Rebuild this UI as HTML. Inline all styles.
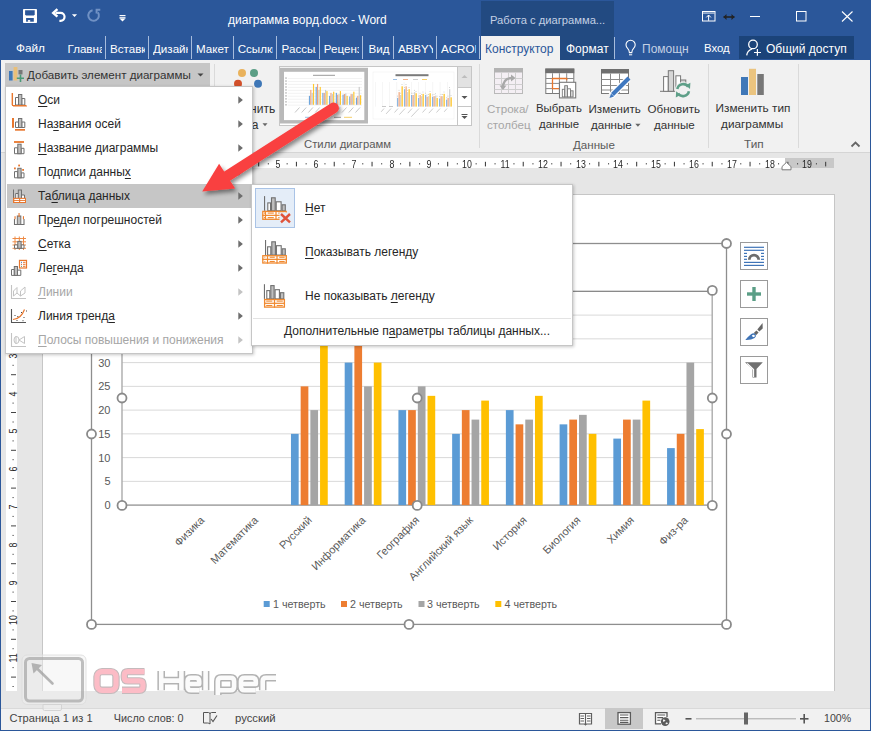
<!DOCTYPE html>
<html><head><meta charset="utf-8">
<style>
*{margin:0;padding:0;box-sizing:border-box}
html,body{width:871px;height:731px;overflow:hidden;background:#e6e6e6;font-family:"Liberation Sans",sans-serif;}
.a{position:absolute}
.t{position:absolute;white-space:nowrap;line-height:1}
#title{left:0;top:0;width:871px;height:60px;background:#2b579a}
#ribbon{left:1px;top:60px;width:869px;height:93px;background:#f1f1f1;border-bottom:1px solid #d5d5d5}
#docbg{left:1px;top:153px;width:869px;height:555px;background:#e6e6e6}
#page{left:42px;top:194px;width:793px;height:497px;background:#fff;border:1px solid #c6c6c6;border-bottom:none}
#status{left:0;top:708px;width:871px;height:23px;background:#f1f1f1;border-top:1px solid #d9d9d9}
#lborder{left:0;top:0;width:1px;height:731px;background:#2b579a}
#rborder{left:870px;top:0;width:1px;height:731px;background:#2b579a}
#bborder{left:0;top:730px;width:871px;height:1px;background:#2b579a}
.wt{color:#fff;font-size:12px}
u{text-decoration:underline;text-underline-offset:2px;text-decoration-thickness:1px;text-decoration-skip-ink:none}
</style></head><body>
<div class="a" id="title"></div>
<div class="a" id="ribbon"></div>
<div class="a" id="docbg"></div>
<div class="a" id="page"></div>
<!-- RULERS -->
<svg class="a" style="left:0;top:153px" width="871" height="540">
<rect x="42" y="5" width="47" height="10" fill="#c8c8c8"/>
<rect x="89" y="5" width="696" height="10" fill="#fff"/>
<rect x="785" y="5" width="49" height="10" fill="#c8c8c8"/>
<rect x="59.9" y="10.2" width="1.1" height="1.2" fill="#444"/>
<rect x="69.1" y="8.8" width="1.1" height="4.6" fill="#444"/>
<rect x="78.7" y="10.2" width="1.1" height="1.2" fill="#444"/>
<rect x="97.6" y="10.2" width="1.1" height="1.2" fill="#444"/>
<rect x="106.9" y="8.8" width="1.1" height="4.6" fill="#444"/>
<rect x="116.5" y="10.2" width="1.1" height="1.2" fill="#444"/>
<rect x="135.4" y="10.2" width="1.1" height="1.2" fill="#444"/>
<rect x="144.7" y="8.8" width="1.1" height="4.6" fill="#444"/>
<rect x="154.3" y="10.2" width="1.1" height="1.2" fill="#444"/>
<rect x="173.2" y="10.2" width="1.1" height="1.2" fill="#444"/>
<rect x="182.5" y="8.8" width="1.1" height="4.6" fill="#444"/>
<rect x="192.1" y="10.2" width="1.1" height="1.2" fill="#444"/>
<rect x="211.0" y="10.2" width="1.1" height="1.2" fill="#444"/>
<rect x="220.3" y="8.8" width="1.1" height="4.6" fill="#444"/>
<rect x="229.9" y="10.2" width="1.1" height="1.2" fill="#444"/>
<rect x="248.8" y="10.2" width="1.1" height="1.2" fill="#444"/>
<rect x="258.1" y="8.8" width="1.1" height="4.6" fill="#444"/>
<rect x="267.8" y="10.2" width="1.1" height="1.2" fill="#444"/>
<rect x="286.6" y="10.2" width="1.1" height="1.2" fill="#444"/>
<rect x="295.9" y="8.8" width="1.1" height="4.6" fill="#444"/>
<rect x="305.6" y="10.2" width="1.1" height="1.2" fill="#444"/>
<rect x="324.4" y="10.2" width="1.1" height="1.2" fill="#444"/>
<rect x="333.7" y="8.8" width="1.1" height="4.6" fill="#444"/>
<rect x="343.4" y="10.2" width="1.1" height="1.2" fill="#444"/>
<rect x="362.2" y="10.2" width="1.1" height="1.2" fill="#444"/>
<rect x="371.5" y="8.8" width="1.1" height="4.6" fill="#444"/>
<rect x="381.1" y="10.2" width="1.1" height="1.2" fill="#444"/>
<rect x="400.0" y="10.2" width="1.1" height="1.2" fill="#444"/>
<rect x="409.3" y="8.8" width="1.1" height="4.6" fill="#444"/>
<rect x="419.0" y="10.2" width="1.1" height="1.2" fill="#444"/>
<rect x="437.9" y="10.2" width="1.1" height="1.2" fill="#444"/>
<rect x="447.1" y="8.8" width="1.1" height="4.6" fill="#444"/>
<rect x="456.8" y="10.2" width="1.1" height="1.2" fill="#444"/>
<rect x="475.6" y="10.2" width="1.1" height="1.2" fill="#444"/>
<rect x="484.9" y="8.8" width="1.1" height="4.6" fill="#444"/>
<rect x="494.5" y="10.2" width="1.1" height="1.2" fill="#444"/>
<rect x="513.4" y="10.2" width="1.1" height="1.2" fill="#444"/>
<rect x="522.7" y="8.8" width="1.1" height="4.6" fill="#444"/>
<rect x="532.4" y="10.2" width="1.1" height="1.2" fill="#444"/>
<rect x="551.2" y="10.2" width="1.1" height="1.2" fill="#444"/>
<rect x="560.5" y="8.8" width="1.1" height="4.6" fill="#444"/>
<rect x="570.1" y="10.2" width="1.1" height="1.2" fill="#444"/>
<rect x="589.0" y="10.2" width="1.1" height="1.2" fill="#444"/>
<rect x="598.3" y="8.8" width="1.1" height="4.6" fill="#444"/>
<rect x="608.0" y="10.2" width="1.1" height="1.2" fill="#444"/>
<rect x="626.9" y="10.2" width="1.1" height="1.2" fill="#444"/>
<rect x="636.1" y="8.8" width="1.1" height="4.6" fill="#444"/>
<rect x="645.8" y="10.2" width="1.1" height="1.2" fill="#444"/>
<rect x="664.6" y="10.2" width="1.1" height="1.2" fill="#444"/>
<rect x="673.9" y="8.8" width="1.1" height="4.6" fill="#444"/>
<rect x="683.5" y="10.2" width="1.1" height="1.2" fill="#444"/>
<rect x="702.5" y="10.2" width="1.1" height="1.2" fill="#444"/>
<rect x="711.7" y="8.8" width="1.1" height="4.6" fill="#444"/>
<rect x="721.4" y="10.2" width="1.1" height="1.2" fill="#444"/>
<rect x="740.2" y="10.2" width="1.1" height="1.2" fill="#444"/>
<rect x="749.5" y="8.8" width="1.1" height="4.6" fill="#444"/>
<rect x="759.1" y="10.2" width="1.1" height="1.2" fill="#444"/>
<rect x="778.0" y="10.2" width="1.1" height="1.2" fill="#444"/>
<rect x="787.3" y="8.8" width="1.1" height="4.6" fill="#444"/>
<rect x="797.0" y="10.2" width="1.1" height="1.2" fill="#444"/>
<rect x="815.9" y="10.2" width="1.1" height="1.2" fill="#444"/>
<rect x="825.1" y="8.8" width="1.1" height="4.6" fill="#444"/>
<rect x="6" y="0" width="11" height="538" fill="#fff"/>
<rect x="12.5" y="3.9" width="1.2" height="1" fill="#444"/>
<rect x="12.5" y="22.8" width="1.2" height="1" fill="#444"/>
<rect x="11" y="32.2" width="5" height="1" fill="#444"/>
<rect x="12.5" y="41.7" width="1.2" height="1" fill="#444"/>
<rect x="12.5" y="60.6" width="1.2" height="1" fill="#444"/>
<rect x="11" y="70.0" width="5" height="1" fill="#444"/>
<rect x="12.5" y="79.5" width="1.2" height="1" fill="#444"/>
<rect x="12.5" y="98.4" width="1.2" height="1" fill="#444"/>
<rect x="11" y="107.8" width="5" height="1" fill="#444"/>
<rect x="12.5" y="117.3" width="1.2" height="1" fill="#444"/>
<rect x="12.5" y="136.2" width="1.2" height="1" fill="#444"/>
<rect x="11" y="145.6" width="5" height="1" fill="#444"/>
<rect x="12.5" y="155.1" width="1.2" height="1" fill="#444"/>
<rect x="12.5" y="174.0" width="1.2" height="1" fill="#444"/>
<rect x="11" y="183.4" width="5" height="1" fill="#444"/>
<rect x="12.5" y="192.9" width="1.2" height="1" fill="#444"/>
<rect x="12.5" y="211.8" width="1.2" height="1" fill="#444"/>
<rect x="11" y="221.2" width="5" height="1" fill="#444"/>
<rect x="12.5" y="230.7" width="1.2" height="1" fill="#444"/>
<rect x="12.5" y="249.6" width="1.2" height="1" fill="#444"/>
<rect x="11" y="259.0" width="5" height="1" fill="#444"/>
<rect x="12.5" y="268.5" width="1.2" height="1" fill="#444"/>
<rect x="12.5" y="287.4" width="1.2" height="1" fill="#444"/>
<rect x="11" y="296.8" width="5" height="1" fill="#444"/>
<rect x="12.5" y="306.2" width="1.2" height="1" fill="#444"/>
<rect x="12.5" y="325.1" width="1.2" height="1" fill="#444"/>
<rect x="11" y="334.6" width="5" height="1" fill="#444"/>
<rect x="12.5" y="344.1" width="1.2" height="1" fill="#444"/>
<rect x="12.5" y="362.9" width="1.2" height="1" fill="#444"/>
<rect x="11" y="372.4" width="5" height="1" fill="#444"/>
<rect x="12.5" y="381.9" width="1.2" height="1" fill="#444"/>
<rect x="12.5" y="400.8" width="1.2" height="1" fill="#444"/>
<rect x="11" y="410.2" width="5" height="1" fill="#444"/>
<rect x="12.5" y="419.7" width="1.2" height="1" fill="#444"/>
<rect x="12.5" y="438.6" width="1.2" height="1" fill="#444"/>
<rect x="11" y="448.0" width="5" height="1" fill="#444"/>
<rect x="12.5" y="457.4" width="1.2" height="1" fill="#444"/>
<rect x="12.5" y="476.4" width="1.2" height="1" fill="#444"/>
<rect x="11" y="485.8" width="5" height="1" fill="#444"/>
<rect x="12.5" y="495.2" width="1.2" height="1" fill="#444"/>
<rect x="12.5" y="514.1" width="1.2" height="1" fill="#444"/>
<rect x="11" y="523.6" width="5" height="1" fill="#444"/>
<rect x="12.5" y="533.0" width="1.2" height="1" fill="#444"/>
<path d="M782 16.8 V13.6 L786.5 9.3 L791 13.6 V16.8 Z" fill="#fff" stroke="#7a7a7a" stroke-width="1"/>
</svg>
<div class="t" style="left:116.9px;top:158.5px;width:20px;text-align:center;font-size:10.5px;color:#262626;transform:scaleX(0.84)">1</div>
<div class="t" style="left:154.7px;top:158.5px;width:20px;text-align:center;font-size:10.5px;color:#262626;transform:scaleX(0.84)">2</div>
<div class="t" style="left:192.5px;top:158.5px;width:20px;text-align:center;font-size:10.5px;color:#262626;transform:scaleX(0.84)">3</div>
<div class="t" style="left:230.3px;top:158.5px;width:20px;text-align:center;font-size:10.5px;color:#262626;transform:scaleX(0.84)">4</div>
<div class="t" style="left:268.1px;top:158.5px;width:20px;text-align:center;font-size:10.5px;color:#262626;transform:scaleX(0.84)">5</div>
<div class="t" style="left:305.9px;top:158.5px;width:20px;text-align:center;font-size:10.5px;color:#262626;transform:scaleX(0.84)">6</div>
<div class="t" style="left:343.7px;top:158.5px;width:20px;text-align:center;font-size:10.5px;color:#262626;transform:scaleX(0.84)">7</div>
<div class="t" style="left:381.5px;top:158.5px;width:20px;text-align:center;font-size:10.5px;color:#262626;transform:scaleX(0.84)">8</div>
<div class="t" style="left:419.3px;top:158.5px;width:20px;text-align:center;font-size:10.5px;color:#262626;transform:scaleX(0.84)">9</div>
<div class="t" style="left:457.1px;top:158.5px;width:20px;text-align:center;font-size:10.5px;color:#262626;transform:scaleX(0.84)">10</div>
<div class="t" style="left:494.9px;top:158.5px;width:20px;text-align:center;font-size:10.5px;color:#262626;transform:scaleX(0.84)">11</div>
<div class="t" style="left:532.7px;top:158.5px;width:20px;text-align:center;font-size:10.5px;color:#262626;transform:scaleX(0.84)">12</div>
<div class="t" style="left:570.5px;top:158.5px;width:20px;text-align:center;font-size:10.5px;color:#262626;transform:scaleX(0.84)">13</div>
<div class="t" style="left:608.3px;top:158.5px;width:20px;text-align:center;font-size:10.5px;color:#262626;transform:scaleX(0.84)">14</div>
<div class="t" style="left:646.1px;top:158.5px;width:20px;text-align:center;font-size:10.5px;color:#262626;transform:scaleX(0.84)">15</div>
<div class="t" style="left:683.9px;top:158.5px;width:20px;text-align:center;font-size:10.5px;color:#262626;transform:scaleX(0.84)">16</div>
<div class="t" style="left:721.7px;top:158.5px;width:20px;text-align:center;font-size:10.5px;color:#262626;transform:scaleX(0.84)">17</div>
<div class="t" style="left:759.5px;top:158.5px;width:20px;text-align:center;font-size:10.5px;color:#262626;transform:scaleX(0.84)">18</div>
<div class="t" style="left:797.3px;top:158.5px;width:20px;text-align:center;font-size:10.5px;color:#262626;transform:scaleX(0.84)">19</div>
<div class="t" style="left:3px;top:275.2px;width:20px;height:10px;text-align:center;font-size:10.5px;color:#262626;transform:rotate(-90deg) scaleX(0.84)">1</div>
<div class="t" style="left:3px;top:313.0px;width:20px;height:10px;text-align:center;font-size:10.5px;color:#262626;transform:rotate(-90deg) scaleX(0.84)">2</div>
<div class="t" style="left:3px;top:350.8px;width:20px;height:10px;text-align:center;font-size:10.5px;color:#262626;transform:rotate(-90deg) scaleX(0.84)">3</div>
<div class="t" style="left:3px;top:388.6px;width:20px;height:10px;text-align:center;font-size:10.5px;color:#262626;transform:rotate(-90deg) scaleX(0.84)">4</div>
<div class="t" style="left:3px;top:426.4px;width:20px;height:10px;text-align:center;font-size:10.5px;color:#262626;transform:rotate(-90deg) scaleX(0.84)">5</div>
<div class="t" style="left:3px;top:464.2px;width:20px;height:10px;text-align:center;font-size:10.5px;color:#262626;transform:rotate(-90deg) scaleX(0.84)">6</div>
<div class="t" style="left:3px;top:502.0px;width:20px;height:10px;text-align:center;font-size:10.5px;color:#262626;transform:rotate(-90deg) scaleX(0.84)">7</div>
<div class="t" style="left:3px;top:539.8px;width:20px;height:10px;text-align:center;font-size:10.5px;color:#262626;transform:rotate(-90deg) scaleX(0.84)">8</div>
<div class="t" style="left:3px;top:577.6px;width:20px;height:10px;text-align:center;font-size:10.5px;color:#262626;transform:rotate(-90deg) scaleX(0.84)">9</div>
<div class="t" style="left:3px;top:615.4px;width:20px;height:10px;text-align:center;font-size:10.5px;color:#262626;transform:rotate(-90deg) scaleX(0.84)">10</div>
<div class="t" style="left:3px;top:653.2px;width:20px;height:10px;text-align:center;font-size:10.5px;color:#262626;transform:rotate(-90deg) scaleX(0.84)">11</div>
<!-- CHART -->
<svg class="a" style="left:0;top:0" width="871" height="731" font-family="Liberation Sans, sans-serif">
<rect x="122" y="480.85" width="590" height="1" fill="#d9d9d9"/>
<rect x="122" y="457.10" width="590" height="1" fill="#d9d9d9"/>
<rect x="122" y="433.35" width="590" height="1" fill="#d9d9d9"/>
<rect x="122" y="409.60" width="590" height="1" fill="#d9d9d9"/>
<rect x="122" y="385.85" width="590" height="1" fill="#d9d9d9"/>
<rect x="122" y="362.10" width="590" height="1" fill="#d9d9d9"/>
<rect x="122" y="338.35" width="590" height="1" fill="#d9d9d9"/>
<rect x="122" y="314.60" width="590" height="1" fill="#d9d9d9"/>
<rect x="122" y="290.85" width="590" height="1" fill="#d9d9d9"/>
<rect x="122" y="504.45" width="590" height="1.3" fill="#929292"/>
<text x="110.5" y="509.1" font-size="11" fill="#595959" text-anchor="end">0</text>
<text x="110.5" y="485.4" font-size="11" fill="#595959" text-anchor="end">5</text>
<text x="110.5" y="461.6" font-size="11" fill="#595959" text-anchor="end">10</text>
<text x="110.5" y="437.9" font-size="11" fill="#595959" text-anchor="end">15</text>
<text x="110.5" y="414.1" font-size="11" fill="#595959" text-anchor="end">20</text>
<text x="110.5" y="390.4" font-size="11" fill="#595959" text-anchor="end">25</text>
<text x="110.5" y="366.6" font-size="11" fill="#595959" text-anchor="end">30</text>
<text x="110.5" y="342.9" font-size="11" fill="#595959" text-anchor="end">35</text>
<text x="110.5" y="319.1" font-size="11" fill="#595959" text-anchor="end">40</text>
<text x="110.5" y="295.4" font-size="11" fill="#595959" text-anchor="end">45</text>
<text x="202.2" y="518" font-size="11" fill="#595959" text-anchor="end" dominant-baseline="central" transform="rotate(-45 202.2 518)">Физика</text>
<text x="255.9" y="518" font-size="11" fill="#595959" text-anchor="end" dominant-baseline="central" transform="rotate(-45 255.9 518)">Математика</text>
<rect x="290.96" y="433.85" width="7.7" height="71.25" fill="#5b9bd5"/>
<rect x="300.66" y="386.35" width="7.7" height="118.75" fill="#ed7d31"/>
<rect x="310.36" y="410.10" width="7.7" height="95.00" fill="#a5a5a5"/>
<rect x="320.06" y="338.85" width="7.7" height="166.25" fill="#ffc000"/>
<text x="309.7" y="518" font-size="11" fill="#595959" text-anchor="end" dominant-baseline="central" transform="rotate(-45 309.7 518)">Русский</text>
<rect x="344.69" y="362.60" width="7.7" height="142.50" fill="#5b9bd5"/>
<rect x="354.39" y="338.85" width="7.7" height="166.25" fill="#ed7d31"/>
<rect x="364.09" y="386.35" width="7.7" height="118.75" fill="#a5a5a5"/>
<rect x="373.79" y="362.60" width="7.7" height="142.50" fill="#ffc000"/>
<text x="363.4" y="518" font-size="11" fill="#595959" text-anchor="end" dominant-baseline="central" transform="rotate(-45 363.4 518)">Информатика</text>
<rect x="398.42" y="410.10" width="7.7" height="95.00" fill="#5b9bd5"/>
<rect x="408.12" y="410.10" width="7.7" height="95.00" fill="#ed7d31"/>
<rect x="417.82" y="386.35" width="7.7" height="118.75" fill="#a5a5a5"/>
<rect x="427.52" y="395.85" width="7.7" height="109.25" fill="#ffc000"/>
<text x="417.1" y="518" font-size="11" fill="#595959" text-anchor="end" dominant-baseline="central" transform="rotate(-45 417.1 518)">География</text>
<rect x="452.15" y="433.85" width="7.7" height="71.25" fill="#5b9bd5"/>
<rect x="461.85" y="410.10" width="7.7" height="95.00" fill="#ed7d31"/>
<rect x="471.55" y="419.60" width="7.7" height="85.50" fill="#a5a5a5"/>
<rect x="481.25" y="400.60" width="7.7" height="104.50" fill="#ffc000"/>
<text x="470.8" y="518" font-size="11" fill="#595959" text-anchor="end" dominant-baseline="central" transform="rotate(-45 470.8 518)">Английский язык</text>
<rect x="505.88" y="410.10" width="7.7" height="95.00" fill="#5b9bd5"/>
<rect x="515.58" y="424.35" width="7.7" height="80.75" fill="#ed7d31"/>
<rect x="525.28" y="419.60" width="7.7" height="85.50" fill="#a5a5a5"/>
<rect x="534.98" y="395.85" width="7.7" height="109.25" fill="#ffc000"/>
<text x="524.6" y="518" font-size="11" fill="#595959" text-anchor="end" dominant-baseline="central" transform="rotate(-45 524.6 518)">История</text>
<rect x="559.61" y="424.35" width="7.7" height="80.75" fill="#5b9bd5"/>
<rect x="569.31" y="419.60" width="7.7" height="85.50" fill="#ed7d31"/>
<rect x="579.01" y="414.85" width="7.7" height="90.25" fill="#a5a5a5"/>
<rect x="588.71" y="433.85" width="7.7" height="71.25" fill="#ffc000"/>
<text x="578.3" y="518" font-size="11" fill="#595959" text-anchor="end" dominant-baseline="central" transform="rotate(-45 578.3 518)">Биология</text>
<rect x="613.34" y="438.60" width="7.7" height="66.50" fill="#5b9bd5"/>
<rect x="623.04" y="419.60" width="7.7" height="85.50" fill="#ed7d31"/>
<rect x="632.74" y="419.60" width="7.7" height="85.50" fill="#a5a5a5"/>
<rect x="642.44" y="400.60" width="7.7" height="104.50" fill="#ffc000"/>
<text x="632.0" y="518" font-size="11" fill="#595959" text-anchor="end" dominant-baseline="central" transform="rotate(-45 632.0 518)">Химия</text>
<rect x="667.07" y="448.10" width="7.7" height="57.00" fill="#5b9bd5"/>
<rect x="676.77" y="433.85" width="7.7" height="71.25" fill="#ed7d31"/>
<rect x="686.47" y="362.60" width="7.7" height="142.50" fill="#a5a5a5"/>
<rect x="696.17" y="429.10" width="7.7" height="76.00" fill="#ffc000"/>
<text x="685.8" y="518" font-size="11" fill="#595959" text-anchor="end" dominant-baseline="central" transform="rotate(-45 685.8 518)">Физ-ра</text>
<rect x="263.7" y="601" width="6" height="6" fill="#5b9bd5"/>
<text x="273" y="608" font-size="10.7" fill="#595959">1 четверть</text>
<rect x="341" y="601" width="6" height="6" fill="#ed7d31"/>
<text x="350" y="608" font-size="10.7" fill="#595959">2 четверть</text>
<rect x="418.5" y="601" width="6" height="6" fill="#a5a5a5"/>
<text x="427" y="608" font-size="10.7" fill="#595959">3 четверть</text>
<rect x="495.3" y="601" width="6" height="6" fill="#ffc000"/>
<text x="504.5" y="608" font-size="10.7" fill="#595959">4 четверть</text>
<rect x="91.5" y="243.5" width="635" height="380.9" fill="none" stroke="#8e8e8e" stroke-width="1.3"/>
<path d="M122 291 V505 M712.2 291 V505" fill="none" stroke="#ababab" stroke-width="1.4"/>
<rect x="122" y="290.7" width="590" height="1.3" fill="#8a8a8a"/>
<circle cx="91.5" cy="243.5" r="4.5" fill="#fff" stroke="#8a8a8a" stroke-width="1.8"/>
<circle cx="91.5" cy="434" r="4.5" fill="#fff" stroke="#8a8a8a" stroke-width="1.8"/>
<circle cx="91.5" cy="624.4" r="4.5" fill="#fff" stroke="#8a8a8a" stroke-width="1.8"/>
<circle cx="409" cy="243.5" r="4.5" fill="#fff" stroke="#8a8a8a" stroke-width="1.8"/>
<circle cx="409" cy="624.4" r="4.5" fill="#fff" stroke="#8a8a8a" stroke-width="1.8"/>
<circle cx="726.5" cy="243.5" r="4.5" fill="#fff" stroke="#8a8a8a" stroke-width="1.8"/>
<circle cx="726.5" cy="434" r="4.5" fill="#fff" stroke="#8a8a8a" stroke-width="1.8"/>
<circle cx="726.5" cy="624.4" r="4.5" fill="#fff" stroke="#8a8a8a" stroke-width="1.8"/>
<circle cx="122" cy="290.4" r="4.5" fill="#fff" stroke="#8a8a8a" stroke-width="1.8"/>
<circle cx="122" cy="398" r="4.5" fill="#fff" stroke="#8a8a8a" stroke-width="1.8"/>
<circle cx="122" cy="505.4" r="4.5" fill="#fff" stroke="#8a8a8a" stroke-width="1.8"/>
<circle cx="417.2" cy="290.4" r="4.5" fill="#fff" stroke="#8a8a8a" stroke-width="1.8"/>
<circle cx="417.2" cy="398" r="4.5" fill="#fff" stroke="#8a8a8a" stroke-width="1.8"/>
<circle cx="417.2" cy="505.4" r="4.5" fill="#fff" stroke="#8a8a8a" stroke-width="1.8"/>
<circle cx="712.3" cy="290.4" r="4.5" fill="#fff" stroke="#8a8a8a" stroke-width="1.8"/>
<circle cx="712.3" cy="398" r="4.5" fill="#fff" stroke="#8a8a8a" stroke-width="1.8"/>
<circle cx="712.3" cy="505.4" r="4.5" fill="#fff" stroke="#8a8a8a" stroke-width="1.8"/>
<rect x="740.5" y="242.5" width="27" height="27" fill="#fff" stroke="#9a9a9a" stroke-width="1"/>
<rect x="740.5" y="280.5" width="27" height="27" fill="#fff" stroke="#9a9a9a" stroke-width="1"/>
<rect x="740.5" y="318.5" width="27" height="27" fill="#fff" stroke="#9a9a9a" stroke-width="1"/>
<rect x="740.5" y="356.5" width="27" height="27" fill="#fff" stroke="#9a9a9a" stroke-width="1"/>
<rect x="744" y="246.7" width="20" height="1.2" fill="#3f74b7"/>
<rect x="744" y="249.7" width="20" height="1.2" fill="#3f74b7"/>
<rect x="744" y="261.8" width="20" height="1.2" fill="#3f74b7"/>
<rect x="744" y="264.8" width="20" height="1.2" fill="#3f74b7"/>
<rect x="744" y="252.8" width="3" height="1.2" fill="#3f74b7"/>
<rect x="761" y="252.8" width="3" height="1.2" fill="#3f74b7"/>
<rect x="744" y="255.8" width="3" height="1.2" fill="#3f74b7"/>
<rect x="761" y="255.8" width="3" height="1.2" fill="#3f74b7"/>
<rect x="744" y="258.7" width="3" height="1.2" fill="#3f74b7"/>
<rect x="761" y="258.7" width="3" height="1.2" fill="#3f74b7"/>
<path d="M749.3 259.8 A4.7 4.7 0 0 1 758.7 259.8" fill="none" stroke="#6d6d6d" stroke-width="2.8"/>
<rect x="747" y="292.3" width="14" height="3.4" fill="#5a9e86"/><rect x="752.3" y="287" width="3.4" height="14" fill="#5a9e86"/>
<path d="M762.6 323 L762.7 328.4 L759.3 331.6 L757.3 329.6 Z" fill="#666"/>
<path d="M756.4 330.4 L758.6 332.6 L756 335.2 L753.8 333 Z" fill="#666"/>
<path d="M745.3 339.9 Q748.5 336 751.3 333.9 Q753.8 332.5 755.5 334.3 Q756.8 336.3 754.6 338.1 Q751 340.2 745.3 339.9 Z" fill="#3f74b7"/>
<path d="M751.8 335.6 Q753.3 334.2 754.5 335 Q755.3 336.2 754.1 337.3 L752.6 336.7 Z" fill="#fff"/>
<path d="M745 362.3 H762.8 L756.5 369 V377.6 H752.5 V369 Z" fill="#707070"/>
<path d="M747.2 363.3 L753.6 369.6 V377" fill="none" stroke="#fff" stroke-width="1.1"/>
</svg>
<div class="a" id="status"></div>
<!-- STATUS -->
<div class="a" style="left:605px;top:708px;width:38px;height:21px;background:#c8c8c8"></div>
<svg class="a" style="left:0;top:700px" width="871" height="31">
 <!-- proofing -->
 <path d="M203.5 12.5 H208.5 Q210 12.5 210 14 V24 Q209 23 207.5 23 H203.5 Z M210 14 Q210 12.5 211.5 12.5 H216" fill="none" stroke="#555" stroke-width="1"/>
 <path d="M211 19 L213 21.5 L217 15.5" fill="none" stroke="#555" stroke-width="1.1"/>
 <!-- read mode -->
 <path d="M579.5 13.5 H585.5 V24 H579.5 Z M585.5 13.5 H591.5 V24 H585.5" fill="#fff" stroke="#606060" stroke-width="1.2"/>
 <path d="M580.5 16 H584 M580.5 18.5 H584 M580.5 21 H584 M587 16 H590.5 M587 18.5 H590.5 M587 21 H590.5" stroke="#606060" stroke-width="1"/>
 <path d="M584 24 L585.5 25.8 L587 24" fill="#606060"/>
 <!-- print layout -->
 <rect x="618" y="12.6" width="12.4" height="11.6" fill="#fff" stroke="#5a5a5a" stroke-width="1.3"/>
 <path d="M620 15 H628.4 M620 17.6 H628.4 M620 20.2 H628.4 M620 22.4 H628.4" stroke="#5a5a5a" stroke-width="1.1"/>
 <!-- web layout -->
 <path d="M661 23.8 H655.5 V12.6 H667 V17" fill="#fff" stroke="#5a5a5a" stroke-width="1.3"/>
 <path d="M657.3 15 H665.2 M657.3 17.6 H663 M657.3 20.2 H660.5" stroke="#5a5a5a" stroke-width="1.1"/>
 <circle cx="665.2" cy="21.6" r="4.3" fill="#5a5a5a"/>
 <path d="M663 19.5 Q664.5 19 665.5 20.5 Q664.5 22 663 21.5 Z M666 22.5 Q667.5 22 668 23.5 Q666.5 24.8 665.5 24 Z" fill="#f1f1f1"/>
 <!-- zoom -->
 <rect x="685.5" y="18" width="6" height="1.6" fill="#555"/>
 <rect x="696" y="18.3" width="100" height="1" fill="#a6a6a6"/>
 <rect x="744" y="12.5" width="4" height="12" fill="#666"/>
 <rect x="800" y="18" width="8.5" height="1.6" fill="#555"/>
 <rect x="803.4" y="14" width="1.6" height="9.5" fill="#555"/>
</svg>
<div class="t" style="left:9.5px;top:712.6px;font-size:11.1px;color:#444">Страница 1 из 1</div>
<div class="t" style="left:113.7px;top:712.6px;font-size:10.85px;color:#444">Число слов: 0</div>
<div class="t" style="left:235px;top:712.6px;font-size:11.3px;color:#444">русский</div>
<div class="t" style="left:824px;top:712.6px;font-size:10.6px;color:#444">100%</div>
<!-- TITLE BAR -->
<svg class="a" style="left:0;top:0" width="871" height="60">
 <!-- save -->
 <rect x="23" y="9" width="14" height="14.1" rx="0.8" fill="#fff"/>
 <path d="M25.1 10.3 H34.7 V14.4 L33.8 15.4 H26 L25.1 14.4 Z" fill="#2b579a"/>
 <rect x="26.1" y="18" width="7.7" height="3.7" fill="#2b579a"/>
 <rect x="27.9" y="20.1" width="2.3" height="1.7" fill="#fff"/>
 <!-- undo -->
 <path d="M55.5 12.9 H60.6 A3.95 3.95 0 0 1 60.6 20.8 H59.4" fill="none" stroke="#fff" stroke-width="2.2"/>
 <path d="M57.4 9.1 L53.2 12.9 L57.4 16.7" fill="none" stroke="#fff" stroke-width="2.4"/>
 <path d="M71.9 14.2 H77.1 L74.5 17.1 Z" fill="#fff"/>
 <!-- redo disabled -->
 <path d="M92.6 10.3 A5.3 5.3 0 1 0 97.9 12.4" fill="none" stroke="#7091c4" stroke-width="2"/>
 <path d="M100.3 9.8 H96.6 V13.6" fill="none" stroke="#7091c4" stroke-width="2"/>
 <!-- customize qat -->
 <rect x="119.5" y="15" width="6" height="1.2" fill="#fff"/>
 <rect x="119.5" y="17.2" width="6" height="1.2" fill="#fff"/>
 <path d="M119.5 18.5 H125.5 L122.5 21.5 Z" fill="#fff"/>
 <!-- contextual header -->
 <rect x="481" y="1" width="133" height="59" fill="#224a81"/>
 <!-- window controls -->
 <rect x="702.5" y="11.5" width="12.5" height="9.5" fill="none" stroke="#fff" stroke-width="1"/>
 <rect x="703" y="12.6" width="11.5" height="0.9" fill="#fff"/>
 <path d="M708.6 15 V20.8 M706.3 17.4 L708.6 15 L710.9 17.4" fill="none" stroke="#fff" stroke-width="1"/>
 <path d="M723.5 17 H734.5" stroke="#222" stroke-width="1.6"/>
 <path d="M723.5 17 L726.5 14 V20 Z M734.5 17 L731.5 14 V20 Z" fill="#222"/>
 <line x1="750" y1="16.5" x2="760" y2="16.5" stroke="#fff" stroke-width="1"/>
 <rect x="796.5" y="11.5" width="9.5" height="9.5" fill="none" stroke="#fff" stroke-width="1"/>
 <path d="M842 11.5 L852.5 21.5 M852.5 11.5 L842 21.5" stroke="#fff" stroke-width="1.1"/>
 <!-- tab separators -->
 <g fill="#a7bcdc">
  <rect x="105" y="36" width="1" height="23"/><rect x="148" y="36" width="1" height="23"/>
  <rect x="191" y="36" width="1" height="23"/><rect x="233" y="36" width="1" height="23"/>
  <rect x="276" y="36" width="1" height="23"/><rect x="319" y="36" width="1" height="23"/>
  <rect x="362" y="36" width="1" height="23"/><rect x="393" y="36" width="1" height="23"/>
  <rect x="436" y="36" width="1" height="23"/><rect x="479" y="36" width="1" height="23"/>
  <rect x="614" y="37" width="1" height="22"/>
 </g>
 <!-- active tab -->
 <rect x="481" y="36" width="79" height="24" fill="#f1f1f1"/>
 <!-- share button -->
 <rect x="739" y="36" width="115" height="23" fill="#1b4379"/>
 <!-- lightbulb -->
 <path d="M627.6 48.3 A4.6 4.6 0 1 1 633.6 48.3 Q631.8 50.2 631.8 52.6 H629.4 Q629.4 50.2 627.6 48.3 Z" fill="none" stroke="#fff" stroke-width="1.1"/>
 <line x1="629" y1="54.8" x2="632.2" y2="54.8" stroke="#fff" stroke-width="1"/>
 <!-- person icon -->
 <circle cx="753" cy="44.4" r="4.3" fill="none" stroke="#fff" stroke-width="1.3"/>
 <path d="M746.7 55.4 Q747.3 50.6 752 49" fill="none" stroke="#fff" stroke-width="1.3"/>
 <path d="M754 52.5 H761 M757.4 49.1 V55.8" stroke="#fff" stroke-width="1.2"/>
</svg>
<div class="t" style="left:228px;top:14px;font-size:12px;color:#fff">диаграмма ворд.docx - Word</div>
<div class="t" style="left:490px;top:14.5px;font-size:11.2px;color:#c4d0e4">Работа с диаграмма...</div>
<div class="t" style="left:16px;top:43px;font-size:11.8px;color:#fff">Файл</div>
<div class="a" style="left:67.5px;top:36px;width:34.6px;height:24px;overflow:hidden"><div class="t" style="left:0;top:7px;font-size:11.6px;color:#fff">Главная</div></div>
<div class="a" style="left:110px;top:36px;width:34.9px;height:24px;overflow:hidden"><div class="t" style="left:0;top:7px;font-size:11.6px;color:#fff">Вставка</div></div>
<div class="a" style="left:153px;top:36px;width:34.7px;height:24px;overflow:hidden"><div class="t" style="left:0;top:7px;font-size:11.6px;color:#fff">Дизайн</div></div>
<div class="a" style="left:196px;top:36px;width:33.5px;height:24px;overflow:hidden"><div class="t" style="left:0;top:7px;font-size:11.6px;color:#fff">Макет</div></div>
<div class="a" style="left:237.7px;top:36px;width:35.3px;height:24px;overflow:hidden"><div class="t" style="left:0;top:7px;font-size:11.6px;color:#fff">Ссылки</div></div>
<div class="a" style="left:281.6px;top:36px;width:34.4px;height:24px;overflow:hidden"><div class="t" style="left:0;top:7px;font-size:11.6px;color:#fff">Рассылки</div></div>
<div class="a" style="left:323.8px;top:36px;width:35.3px;height:24px;overflow:hidden"><div class="t" style="left:0;top:7px;font-size:11.6px;color:#fff">Рецензирование</div></div>
<div class="a" style="left:368.6px;top:36px;width:21.5px;height:24px;overflow:hidden"><div class="t" style="left:0;top:7px;font-size:11.6px;color:#fff">Вид</div></div>
<div class="a" style="left:397.9px;top:36px;width:35.2px;height:24px;overflow:hidden"><div class="t" style="left:0;top:7px;font-size:11.6px;color:#fff">ABBYY FineReader</div></div>
<div class="a" style="left:441px;top:36px;width:34.5px;height:24px;overflow:hidden"><div class="t" style="left:0;top:7px;font-size:11.6px;color:#fff">ACROBAT</div></div>

<div class="t" style="left:485px;top:43px;font-size:12px;color:#2b579a">Конструктор</div>
<div class="t" style="left:566px;top:43px;font-size:12px;color:#fff">Формат</div>
<div class="a" style="left:641px;top:36px;width:48px;height:24px;overflow:hidden"><div class="t" style="left:1px;top:7px;font-size:12px;color:#c4d0e4">Помощник</div></div>
<div class="t" style="left:704px;top:43px;font-size:11.4px;color:#fff">Вход</div>
<div class="t" style="left:766px;top:42.8px;font-size:12px;color:#fff">Общий доступ</div>

<!-- RIBBON -->
<div class="a" style="left:5px;top:63px;width:205px;height:23px;background:#c6c6c6"></div>
<svg class="a" style="left:0;top:60px" width="871" height="93">
 <!-- add element icon -->
 <rect x="9" y="11" width="3.6" height="9.5" fill="#3f78b8"/>
 <rect x="13.6" y="7" width="3.8" height="13.5" fill="#e9bf78"/>
 <rect x="18.5" y="10" width="4" height="4.4" fill="#777"/>
 <path d="M20.5 14.5 V22 M16.8 18.3 H24" stroke="#4b9a78" stroke-width="1.6"/>
 <path d="M197.5 13.5 H203.5 L200.5 16.5 Z" fill="#444"/>
 <!-- separators -->
 <rect x="214" y="4" width="1" height="83" fill="#dadada"/>
 <rect x="479" y="4" width="1" height="84" fill="#dadada"/>
 <rect x="708" y="4" width="1" height="84" fill="#dadada"/>
 <rect x="798" y="4" width="1" height="84" fill="#dadada"/>
 <!-- color circles -->
 <circle cx="242" cy="13" r="4" fill="#e9b25c"/>
 <circle cx="254" cy="13" r="4" fill="#5b9e86"/>
 <circle cx="238" cy="23.8" r="4" fill="#d2502a"/>
 <circle cx="258" cy="23.8" r="4" fill="#3e77b7"/>
 <path d="M262.5 63.3 H267.5 L265 66.2 Z" fill="#666"/>
 <path d="M635.3 63.8 H640.5 L637.9 66.8 Z" fill="#666"/>
 <!-- gallery -->
 <rect x="279.5" y="6.5" width="192" height="59" fill="#fff" stroke="#c6c6c6"/>
 <rect x="457.5" y="6.5" width="14" height="21" fill="#e2e2e2" stroke="#c6c6c6"/>
 <rect x="457.5" y="27.5" width="14" height="19" fill="#fff" stroke="#c6c6c6"/>
 <rect x="457.5" y="46.5" width="14" height="19" fill="#fff" stroke="#c6c6c6"/>
 <path d="M461.5 18 L464.5 15 L467.5 18 Z" fill="#bdbdbd"/>
 <path d="M461.5 36 H467.5 L464.5 39 Z" fill="#555"/>
 <rect x="461.5" y="54" width="6" height="1" fill="#555"/>
 <path d="M461.5 56 H467.5 L464.5 59 Z" fill="#555"/>
 <!-- collapse arrow -->
 <path d="M851.5 86.5 L855.5 82.5 L859.5 86.5" fill="none" stroke="#666" stroke-width="1.8"/>
</svg>
<div class="t" style="left:27px;top:69px;font-size:11.6px;color:#333">Добавить элемент диаграммы</div>
<div class="t" style="left:221px;top:103px;font-size:12px;color:#333">Изменить</div>
<div class="t" style="left:227px;top:119px;font-size:12px;color:#333">цвета</div>
<div class="t" style="left:304px;top:138.5px;font-size:11.3px;color:#5a5a5a">Стили диаграмм</div>
<div class="t" style="left:487px;top:103px;font-size:11.6px;color:#a6a6a6">Строка/</div>
<div class="t" style="left:487px;top:119px;font-size:11.6px;color:#a6a6a6">столбец</div>
<div class="t" style="left:536px;top:103px;font-size:11.4px;color:#333">Выбрать</div>
<div class="t" style="left:539px;top:119px;font-size:11.4px;color:#333">данные</div>
<div class="t" style="left:588.5px;top:103px;font-size:11.6px;color:#333">Изменить</div>
<div class="t" style="left:591px;top:119px;font-size:11.6px;color:#333">данные</div>
<div class="t" style="left:647.5px;top:103px;font-size:11.6px;color:#333">Обновить</div>
<div class="t" style="left:654px;top:119px;font-size:11.6px;color:#333">данные</div>
<div class="t" style="left:573px;top:138.5px;font-size:11.6px;color:#5a5a5a">Данные</div>
<div class="t" style="left:715.5px;top:103px;font-size:11.8px;color:#333">Изменить тип</div>
<div class="t" style="left:721px;top:119px;font-size:11.8px;color:#333">диаграммы</div>
<div class="t" style="left:744px;top:138.5px;font-size:11.8px;color:#5a5a5a">Тип</div>

<!-- GALLERY -->
<svg class="a" style="left:0;top:0" width="480" height="130">
<rect x="280" y="67.8" width="88" height="55.7" fill="#b9b9b9"/>
<rect x="284" y="71.8" width="80.3" height="48.3" fill="#fff"/>
<rect x="313" y="74.8" width="22" height="1" fill="#9a9a9a"/>
<rect x="288" y="78.00" width="74" height="0.5" fill="#e6e6e6"/>
<rect x="285" y="77.60" width="2" height="0.9" fill="#aaa"/>
<rect x="288" y="80.98" width="74" height="0.5" fill="#e6e6e6"/>
<rect x="285" y="80.58" width="2" height="0.9" fill="#aaa"/>
<rect x="288" y="83.96" width="74" height="0.5" fill="#e6e6e6"/>
<rect x="285" y="83.56" width="2" height="0.9" fill="#aaa"/>
<rect x="288" y="86.94" width="74" height="0.5" fill="#e6e6e6"/>
<rect x="285" y="86.54" width="2" height="0.9" fill="#aaa"/>
<rect x="288" y="89.92" width="74" height="0.5" fill="#e6e6e6"/>
<rect x="285" y="89.52" width="2" height="0.9" fill="#aaa"/>
<rect x="288" y="92.90" width="74" height="0.5" fill="#e6e6e6"/>
<rect x="285" y="92.50" width="2" height="0.9" fill="#aaa"/>
<rect x="288" y="95.88" width="74" height="0.5" fill="#e6e6e6"/>
<rect x="285" y="95.48" width="2" height="0.9" fill="#aaa"/>
<rect x="288" y="98.86" width="74" height="0.5" fill="#e6e6e6"/>
<rect x="285" y="98.46" width="2" height="0.9" fill="#aaa"/>
<rect x="288" y="101.84" width="74" height="0.5" fill="#e6e6e6"/>
<rect x="285" y="101.44" width="2" height="0.9" fill="#aaa"/>
<rect x="288" y="104.82" width="74" height="0.5" fill="#e6e6e6"/>
<rect x="285" y="104.42" width="2" height="0.9" fill="#aaa"/>
<rect x="308.90" y="95.86" width="1.15" height="8.94" fill="#6fa6dc"/>
<rect x="310.25" y="89.90" width="1.15" height="14.90" fill="#f0a27a"/>
<rect x="311.60" y="92.88" width="1.15" height="11.92" fill="#c9c9c9"/>
<rect x="312.95" y="83.94" width="1.15" height="20.86" fill="#ffc82e"/>
<rect x="315.62" y="86.92" width="1.15" height="17.88" fill="#6fa6dc"/>
<rect x="316.97" y="83.94" width="1.15" height="20.86" fill="#f0a27a"/>
<rect x="318.32" y="89.90" width="1.15" height="14.90" fill="#c9c9c9"/>
<rect x="319.67" y="86.92" width="1.15" height="17.88" fill="#ffc82e"/>
<rect x="322.34" y="92.88" width="1.15" height="11.92" fill="#6fa6dc"/>
<rect x="323.69" y="92.88" width="1.15" height="11.92" fill="#f0a27a"/>
<rect x="325.04" y="89.90" width="1.15" height="14.90" fill="#c9c9c9"/>
<rect x="326.39" y="91.09" width="1.15" height="13.71" fill="#ffc82e"/>
<rect x="329.06" y="95.86" width="1.15" height="8.94" fill="#6fa6dc"/>
<rect x="330.41" y="92.88" width="1.15" height="11.92" fill="#f0a27a"/>
<rect x="331.76" y="94.07" width="1.15" height="10.73" fill="#c9c9c9"/>
<rect x="333.11" y="91.69" width="1.15" height="13.11" fill="#ffc82e"/>
<rect x="335.78" y="92.88" width="1.15" height="11.92" fill="#6fa6dc"/>
<rect x="337.13" y="94.67" width="1.15" height="10.13" fill="#f0a27a"/>
<rect x="338.48" y="94.07" width="1.15" height="10.73" fill="#c9c9c9"/>
<rect x="339.83" y="91.09" width="1.15" height="13.71" fill="#ffc82e"/>
<rect x="342.50" y="94.67" width="1.15" height="10.13" fill="#6fa6dc"/>
<rect x="343.85" y="94.07" width="1.15" height="10.73" fill="#f0a27a"/>
<rect x="345.20" y="93.48" width="1.15" height="11.32" fill="#c9c9c9"/>
<rect x="346.55" y="95.86" width="1.15" height="8.94" fill="#ffc82e"/>
<rect x="349.22" y="96.46" width="1.15" height="8.34" fill="#6fa6dc"/>
<rect x="350.57" y="94.07" width="1.15" height="10.73" fill="#f0a27a"/>
<rect x="351.92" y="94.07" width="1.15" height="10.73" fill="#c9c9c9"/>
<rect x="353.27" y="91.69" width="1.15" height="13.11" fill="#ffc82e"/>
<rect x="355.94" y="97.65" width="1.15" height="7.15" fill="#6fa6dc"/>
<rect x="357.29" y="95.86" width="1.15" height="8.94" fill="#f0a27a"/>
<rect x="358.64" y="86.92" width="1.15" height="17.88" fill="#c9c9c9"/>
<rect x="359.99" y="95.26" width="1.15" height="9.54" fill="#ffc82e"/>
<path d="M295.0 112.5 L299.5 107.5" stroke="#b5b5b5" stroke-width="0.8"/>
<path d="M301.7 112.5 L306.2 107.5" stroke="#b5b5b5" stroke-width="0.8"/>
<path d="M308.4 112.5 L312.9 107.5" stroke="#b5b5b5" stroke-width="0.8"/>
<path d="M315.2 112.5 L319.7 107.5" stroke="#b5b5b5" stroke-width="0.8"/>
<path d="M321.9 112.5 L326.4 107.5" stroke="#b5b5b5" stroke-width="0.8"/>
<path d="M328.6 112.5 L333.1 107.5" stroke="#b5b5b5" stroke-width="0.8"/>
<path d="M335.3 112.5 L339.8 107.5" stroke="#b5b5b5" stroke-width="0.8"/>
<path d="M342.0 112.5 L346.5 107.5" stroke="#b5b5b5" stroke-width="0.8"/>
<path d="M348.8 112.5 L353.3 107.5" stroke="#b5b5b5" stroke-width="0.8"/>
<path d="M355.5 112.5 L360.0 107.5" stroke="#b5b5b5" stroke-width="0.8"/>
<rect x="305" y="116.8" width="6" height="1" fill="#9cc0e6"/><rect x="320" y="116.8" width="6" height="1" fill="#aaa"/><rect x="334" y="116.8" width="7" height="1" fill="#999"/><rect x="344" y="116.8" width="8" height="1" fill="#f5cf6a"/>
<rect x="373" y="72" width="81" height="47" fill="none" stroke="#f0f0f0" stroke-width="0.6"/>
<rect x="395.5" y="74.2" width="33" height="2" fill="#7a7a7a"/>
<rect x="393" y="79" width="4" height="1" fill="#9cc0e6"/><rect x="403" y="79" width="5" height="1" fill="#f1b48f"/><rect x="413" y="79" width="5" height="1" fill="#cfcfcf"/><rect x="422" y="79" width="5" height="1" fill="#f6cf6a"/>
<rect x="375.0" y="82" width="0.5" height="24.6" fill="#ececec"/>
<rect x="382.2" y="82" width="0.5" height="24.6" fill="#ececec"/>
<rect x="389.4" y="82" width="0.5" height="24.6" fill="#ececec"/>
<rect x="396.6" y="82" width="0.5" height="24.6" fill="#ececec"/>
<rect x="403.8" y="82" width="0.5" height="24.6" fill="#ececec"/>
<rect x="411.0" y="82" width="0.5" height="24.6" fill="#ececec"/>
<rect x="418.2" y="82" width="0.5" height="24.6" fill="#ececec"/>
<rect x="425.4" y="82" width="0.5" height="24.6" fill="#ececec"/>
<rect x="432.6" y="82" width="0.5" height="24.6" fill="#ececec"/>
<rect x="439.8" y="82" width="0.5" height="24.6" fill="#ececec"/>
<rect x="447.0" y="82" width="0.5" height="24.6" fill="#ececec"/>
<rect x="397.00" y="97.90" width="1.3" height="8.70" fill="#8cb7e3"/>
<rect x="397.00" y="95.70" width="1" height="0.8" fill="#c8c8c8"/>
<rect x="398.50" y="92.10" width="1.3" height="14.50" fill="#f3ad84"/>
<rect x="398.50" y="89.90" width="1" height="0.8" fill="#c8c8c8"/>
<rect x="400.00" y="95.00" width="1.3" height="11.60" fill="#d4d4d4"/>
<rect x="400.00" y="92.80" width="1" height="0.8" fill="#c8c8c8"/>
<rect x="401.50" y="86.30" width="1.3" height="20.30" fill="#ffc52a"/>
<rect x="401.50" y="84.10" width="1" height="0.8" fill="#c8c8c8"/>
<rect x="404.00" y="89.20" width="1.3" height="17.40" fill="#8cb7e3"/>
<rect x="404.00" y="87.00" width="1" height="0.8" fill="#c8c8c8"/>
<rect x="405.50" y="86.30" width="1.3" height="20.30" fill="#f3ad84"/>
<rect x="405.50" y="84.10" width="1" height="0.8" fill="#c8c8c8"/>
<rect x="407.00" y="92.10" width="1.3" height="14.50" fill="#d4d4d4"/>
<rect x="407.00" y="89.90" width="1" height="0.8" fill="#c8c8c8"/>
<rect x="408.50" y="89.20" width="1.3" height="17.40" fill="#ffc52a"/>
<rect x="408.50" y="87.00" width="1" height="0.8" fill="#c8c8c8"/>
<rect x="411.00" y="95.00" width="1.3" height="11.60" fill="#8cb7e3"/>
<rect x="411.00" y="92.80" width="1" height="0.8" fill="#c8c8c8"/>
<rect x="412.50" y="95.00" width="1.3" height="11.60" fill="#f3ad84"/>
<rect x="412.50" y="92.80" width="1" height="0.8" fill="#c8c8c8"/>
<rect x="414.00" y="92.10" width="1.3" height="14.50" fill="#d4d4d4"/>
<rect x="414.00" y="89.90" width="1" height="0.8" fill="#c8c8c8"/>
<rect x="415.50" y="93.26" width="1.3" height="13.34" fill="#ffc52a"/>
<rect x="415.50" y="91.06" width="1" height="0.8" fill="#c8c8c8"/>
<rect x="418.00" y="97.90" width="1.3" height="8.70" fill="#8cb7e3"/>
<rect x="418.00" y="95.70" width="1" height="0.8" fill="#c8c8c8"/>
<rect x="419.50" y="95.00" width="1.3" height="11.60" fill="#f3ad84"/>
<rect x="419.50" y="92.80" width="1" height="0.8" fill="#c8c8c8"/>
<rect x="421.00" y="96.16" width="1.3" height="10.44" fill="#d4d4d4"/>
<rect x="421.00" y="93.96" width="1" height="0.8" fill="#c8c8c8"/>
<rect x="422.50" y="93.84" width="1.3" height="12.76" fill="#ffc52a"/>
<rect x="422.50" y="91.64" width="1" height="0.8" fill="#c8c8c8"/>
<rect x="425.00" y="95.00" width="1.3" height="11.60" fill="#8cb7e3"/>
<rect x="425.00" y="92.80" width="1" height="0.8" fill="#c8c8c8"/>
<rect x="426.50" y="96.74" width="1.3" height="9.86" fill="#f3ad84"/>
<rect x="426.50" y="94.54" width="1" height="0.8" fill="#c8c8c8"/>
<rect x="428.00" y="96.16" width="1.3" height="10.44" fill="#d4d4d4"/>
<rect x="428.00" y="93.96" width="1" height="0.8" fill="#c8c8c8"/>
<rect x="429.50" y="93.26" width="1.3" height="13.34" fill="#ffc52a"/>
<rect x="429.50" y="91.06" width="1" height="0.8" fill="#c8c8c8"/>
<rect x="432.00" y="96.74" width="1.3" height="9.86" fill="#8cb7e3"/>
<rect x="432.00" y="94.54" width="1" height="0.8" fill="#c8c8c8"/>
<rect x="433.50" y="96.16" width="1.3" height="10.44" fill="#f3ad84"/>
<rect x="433.50" y="93.96" width="1" height="0.8" fill="#c8c8c8"/>
<rect x="435.00" y="95.58" width="1.3" height="11.02" fill="#d4d4d4"/>
<rect x="435.00" y="93.38" width="1" height="0.8" fill="#c8c8c8"/>
<rect x="436.50" y="97.90" width="1.3" height="8.70" fill="#ffc52a"/>
<rect x="436.50" y="95.70" width="1" height="0.8" fill="#c8c8c8"/>
<rect x="439.00" y="98.48" width="1.3" height="8.12" fill="#8cb7e3"/>
<rect x="439.00" y="96.28" width="1" height="0.8" fill="#c8c8c8"/>
<rect x="440.50" y="96.16" width="1.3" height="10.44" fill="#f3ad84"/>
<rect x="440.50" y="93.96" width="1" height="0.8" fill="#c8c8c8"/>
<rect x="442.00" y="96.16" width="1.3" height="10.44" fill="#d4d4d4"/>
<rect x="442.00" y="93.96" width="1" height="0.8" fill="#c8c8c8"/>
<rect x="443.50" y="93.84" width="1.3" height="12.76" fill="#ffc52a"/>
<rect x="443.50" y="91.64" width="1" height="0.8" fill="#c8c8c8"/>
<rect x="446.00" y="99.64" width="1.3" height="6.96" fill="#8cb7e3"/>
<rect x="446.00" y="97.44" width="1" height="0.8" fill="#c8c8c8"/>
<rect x="447.50" y="97.90" width="1.3" height="8.70" fill="#f3ad84"/>
<rect x="447.50" y="95.70" width="1" height="0.8" fill="#c8c8c8"/>
<rect x="449.00" y="89.20" width="1.3" height="17.40" fill="#d4d4d4"/>
<rect x="449.00" y="87.00" width="1" height="0.8" fill="#c8c8c8"/>
<rect x="450.50" y="97.32" width="1.3" height="9.28" fill="#ffc52a"/>
<rect x="450.50" y="95.12" width="1" height="0.8" fill="#c8c8c8"/>
<rect x="382" y="106" width="4" height="0.8" fill="#bbb"/><rect x="389" y="106" width="4" height="0.8" fill="#bbb"/>
<path d="M381.2 111.8 L384.0 108.5" stroke="#b8b8b8" stroke-width="0.7"/>
<path d="M386.1 113.9 L391.0 108.5" stroke="#b8b8b8" stroke-width="0.7"/>
<path d="M394.5 112.5 L398.0 108.5" stroke="#b8b8b8" stroke-width="0.7"/>
<path d="M399.4 114.6 L405.0 108.5" stroke="#b8b8b8" stroke-width="0.7"/>
<path d="M407.8 113.2 L412.0 108.5" stroke="#b8b8b8" stroke-width="0.7"/>
<path d="M411.3 116.7 L419.0 108.5" stroke="#b8b8b8" stroke-width="0.7"/>
<path d="M422.5 112.5 L426.0 108.5" stroke="#b8b8b8" stroke-width="0.7"/>
<path d="M428.8 113.2 L433.0 108.5" stroke="#b8b8b8" stroke-width="0.7"/>
<path d="M436.5 112.5 L440.0 108.5" stroke="#b8b8b8" stroke-width="0.7"/>
<path d="M444.2 111.8 L447.0 108.5" stroke="#b8b8b8" stroke-width="0.7"/>
</svg>
<!-- DATA GROUP ICONS -->
<svg class="a" style="left:480px;top:64px" width="320" height="40">
 <!-- switch row/col (disabled) -->
 <g transform="translate(14,4)">
  <rect x="0.5" y="0.5" width="28" height="25" fill="#f4eff4" stroke="#b9b9b9"/>
  <rect x="0" y="0" width="29" height="4.5" fill="#b3b3b3"/>
  <path d="M0.5 10.5 H28.5 M0.5 16.5 H28.5 M0.5 21.5 H28.5 M7.5 4.5 V25.5 M14.5 4.5 V25.5 M21.5 4.5 V25.5" stroke="#cfcfcf" stroke-width="1"/>
  <path d="M9 20 Q9 10 18 10" fill="none" stroke="#a9a9a9" stroke-width="2.4"/>
  <path d="M17 6.5 L21.5 10 L17 13.5 Z" fill="#a9a9a9"/>
  <path d="M5.5 17.5 L9 22 L12.5 17.5 Z" fill="#a9a9a9"/>
 </g>
 <!-- select data -->
 <g transform="translate(65,5)">
  <rect x="0.8" y="0" width="28" height="24.5" fill="#fff" stroke="#7a7a7a"/>
  <rect x="0.3" y="-0.4" width="29" height="4.6" fill="#6f6f6f"/>
  <path d="M0.8 9.5 H28.8 M0.8 14.4 H28.8 M0.8 19.6 H28.8 M7.5 4.2 V24.5 M14.4 4.2 V24.5 M21.7 4.2 V24.5" stroke="#8a8a8a" stroke-width="1"/>
  <path d="M21.7 11.2 V9.5 H7.5 V19.6 H14" fill="none" stroke="#e8772e" stroke-width="1.3"/>
  <rect x="14.5" y="13.3" width="16.2" height="15.6" fill="#fff" stroke="#7a7a7a" stroke-width="1.1"/>
  <rect x="17.3" y="20.3" width="2.4" height="7.6" fill="#fff" stroke="#7a7a7a" stroke-width="0.9"/>
  <rect x="19.7" y="16.7" width="2.8" height="11.2" fill="#d6d6d6" stroke="#7a7a7a" stroke-width="0.9"/>
  <rect x="22.5" y="19.8" width="3" height="8.1" fill="#fff" stroke="#7a7a7a" stroke-width="0.9"/>
  <rect x="25.5" y="21.8" width="2.6" height="6.1" fill="#d6d6d6" stroke="#7a7a7a" stroke-width="0.9"/>
 </g>
 <!-- edit data -->
 <g transform="translate(121,5)">
  <rect x="0.5" y="0.5" width="27" height="24" fill="#fff" stroke="#7a7a7a"/>
  <rect x="0" y="0" width="28" height="4.5" fill="#6f6f6f"/>
  <path d="M0.5 10.5 H27.5 M0.5 16.5 H27.5 M0.5 21 H27.5 M9.5 4.5 V24.5 M18.5 4.5 V24.5" stroke="#8a8a8a" stroke-width="1"/>
  <path d="M10 27 L27 10" stroke="#fff" stroke-width="6.5"/>
  <path d="M11.5 25.5 L28 9" stroke="#3f78c0" stroke-width="4"/>
  <path d="M8.5 29 L10 24.5 L13 27.5 Z" fill="#3f78c0"/>
 </g>
 <!-- refresh data -->
 <g transform="translate(180,6)">
  <path d="M0 21.3 H15" stroke="#777" stroke-width="1"/>
  <rect x="3.6" y="6.6" width="4.7" height="14.7" fill="#fff" stroke="#777"/>
  <rect x="8.3" y="0.7" width="5.3" height="20.6" fill="#d6d6d6" stroke="#777"/>
  <rect x="15.9" y="5.8" width="4.7" height="15.5" fill="#fff" stroke="#777"/>
  <rect x="20.6" y="10" width="5.2" height="11.3" fill="#d6d6d6" stroke="#777"/>
  <circle cx="23.1" cy="20.1" r="8.2" fill="#f1f1f1"/>
  <path d="M17.3 19 A6 6 0 0 1 28.2 16.8" fill="none" stroke="#5e9f88" stroke-width="2.6"/>
  <path d="M28.9 21.2 A6 6 0 0 1 18 23.4" fill="none" stroke="#5e9f88" stroke-width="2.6"/>
  <path d="M25.8 15.3 L30.4 12.8 L30 19 Z" fill="#5e9f88"/>
  <path d="M20.4 24.9 L15.8 27.4 L16.2 21.2 Z" fill="#5e9f88"/>
 </g>
 <!-- change chart type -->
 <rect x="261" y="13" width="7" height="18" fill="#3f78b8"/>
 <rect x="269" y="4.8" width="7" height="26.2" fill="#ebc47f"/>
 <rect x="277.3" y="10" width="6.5" height="21" fill="#777"/>
</svg>
<!-- MENU -->
<div class="a" style="left:5px;top:86px;width:248px;height:268px;background:#fff;border:1px solid #c6c6c6;box-shadow:1px 1px 3px rgba(0,0,0,0.22)"></div>
<div class="a" style="left:7px;top:184px;width:244px;height:24px;background:#c6c6c6"></div>
<div class="t" style="left:38px;top:93.8px;font-size:12px;color:#262626"><u>О</u>си</div>
<div class="t" style="left:38px;top:117.8px;font-size:12px;color:#262626">На<u>з</u>вания осей</div>
<div class="t" style="left:38px;top:141.8px;font-size:12px;color:#262626"><u>Н</u>азвание диаграммы</div>
<div class="t" style="left:38px;top:165.8px;font-size:12px;color:#262626">Подписи данны<u>х</u></div>
<div class="t" style="left:38px;top:189.8px;font-size:12px;color:#262626">Та<u>б</u>лица данных</div>
<div class="t" style="left:38px;top:213.8px;font-size:12px;color:#262626">Пр<u>е</u>дел погрешностей</div>
<div class="t" style="left:38px;top:237.8px;font-size:12px;color:#262626"><u>С</u>етка</div>
<div class="t" style="left:38px;top:261.8px;font-size:12px;color:#262626">Ле<u>г</u>енда</div>
<div class="t" style="left:38px;top:285.8px;font-size:12px;color:#a6a6a6"><u>Л</u>инии</div>
<div class="t" style="left:38px;top:309.8px;font-size:12px;color:#262626">Линия тренд<u>а</u></div>
<div class="t" style="left:38px;top:333.8px;font-size:12px;color:#a6a6a6"><u>П</u>олосы повышения и понижения</div>
<svg class="a" style="left:0;top:0" width="260" height="360">
<path d="M238.3 96.2 L242.9 100 L238.3 103.8 Z" fill="#6d6d6d"/>
<path d="M238.3 120.2 L242.9 124 L238.3 127.8 Z" fill="#6d6d6d"/>
<path d="M238.3 144.2 L242.9 148 L238.3 151.8 Z" fill="#6d6d6d"/>
<path d="M238.3 168.2 L242.9 172 L238.3 175.8 Z" fill="#6d6d6d"/>
<path d="M238.3 192.2 L242.9 196 L238.3 199.8 Z" fill="#6d6d6d"/>
<path d="M238.3 216.2 L242.9 220 L238.3 223.8 Z" fill="#6d6d6d"/>
<path d="M238.3 240.2 L242.9 244 L238.3 247.8 Z" fill="#6d6d6d"/>
<path d="M238.3 264.2 L242.9 268 L238.3 271.8 Z" fill="#6d6d6d"/>
<path d="M238.3 288.2 L242.9 292 L238.3 295.8 Z" fill="#c3c3c3"/>
<path d="M238.3 312.2 L242.9 316 L238.3 319.8 Z" fill="#6d6d6d"/>
<path d="M238.3 336.2 L242.9 340 L238.3 343.8 Z" fill="#c3c3c3"/>
<g><path d="M15.5 105 V97.5 H18.5 V105 M21.8 105 V98.5 H24.8 V105 M15.5 105 H24.8" fill="#fff" stroke="#707070" stroke-width="1"/><rect x="18.5" y="94.5" width="3.3000000000000007" height="10.5" fill="#bfbfbf" stroke="#707070" stroke-width="1"/><path d="M12.5 93 V105.5 H26.5" fill="none" stroke="#e8772e" stroke-width="1.1"/><rect x="11.3" y="93.5" width="1.2" height="1" fill="#e8772e"/><rect x="11.3" y="95.5" width="1.2" height="1" fill="#e8772e"/><rect x="11.3" y="97.5" width="1.2" height="1" fill="#e8772e"/><rect x="11.3" y="99.5" width="1.2" height="1" fill="#e8772e"/><rect x="11.3" y="101.5" width="1.2" height="1" fill="#e8772e"/><rect x="11.3" y="103.5" width="1.2" height="1" fill="#e8772e"/><rect x="13.5" y="105.8" width="1" height="1.2" fill="#e8772e"/><rect x="15.5" y="105.8" width="1" height="1.2" fill="#e8772e"/><rect x="17.5" y="105.8" width="1" height="1.2" fill="#e8772e"/><rect x="19.5" y="105.8" width="1" height="1.2" fill="#e8772e"/><rect x="21.5" y="105.8" width="1" height="1.2" fill="#e8772e"/><rect x="23.5" y="105.8" width="1" height="1.2" fill="#e8772e"/><rect x="25.5" y="105.8" width="1" height="1.2" fill="#e8772e"/></g>
<path d="M15.5 127.5 V122 H18.5 V127.5 M21.8 127.5 V122 H24.8 V127.5 M15.5 127.5 H24.8" fill="#fff" stroke="#707070" stroke-width="1"/><rect x="18.5" y="118.5" width="3.3000000000000007" height="9.0" fill="#bfbfbf" stroke="#707070" stroke-width="1"/><rect x="12" y="118" width="2" height="9.8" fill="#e8772e"/><rect x="15" y="129" width="10" height="1.7" fill="#e8772e"/>
<path d="M14.5 153.7 V147.8 H17.8 V153.7 M21.1 153.7 V148.3 H24 V153.7 M14.5 153.7 H24" fill="#fff" stroke="#707070" stroke-width="1"/><rect x="17.8" y="144.2" width="3.3000000000000007" height="9.5" fill="#bfbfbf" stroke="#707070" stroke-width="1"/><rect x="14" y="141.1" width="10" height="1.8" fill="#e8772e"/>
<path d="M14.5 177.8 V171.6 H17.8 V177.8 M21.1 177.8 V172.9 H24 V177.8 M14.5 177.8 H24" fill="#fff" stroke="#707070" stroke-width="1"/><rect x="17.8" y="168.3" width="3.3000000000000007" height="9.5" fill="#bfbfbf" stroke="#707070" stroke-width="1"/><rect x="18.2" y="164.6" width="1.8" height="1.8" fill="#e8772e"/><rect x="14" y="167.5" width="1.8" height="1.8" fill="#e8772e"/><rect x="22.2" y="169" width="1.8" height="1.8" fill="#e8772e"/>
<rect x="13" y="189.5" width="1" height="9" fill="#707070"/><path d="M15.7 199 V193.5 H18.3 V199 M21.5 199 V195 H24.5 V199 M15.7 199 H24.5" fill="#fff" stroke="#707070" stroke-width="1"/><rect x="18.3" y="190" width="3.1999999999999993" height="9" fill="#bfbfbf" stroke="#707070" stroke-width="1"/><rect x="13" y="197.8" width="13" height="5.2" fill="#e8772e"/><rect x="14.3" y="198.9" width="4.8" height="1.1" fill="#fff"/><rect x="20.2" y="198.9" width="4.8" height="1.1" fill="#fff"/><rect x="14.3" y="200.9" width="4.8" height="1.1" fill="#fff"/><rect x="20.2" y="200.9" width="4.8" height="1.1" fill="#fff"/>
<path d="M14.5 219 V224.5 H24 V219" fill="none" stroke="#707070" stroke-width="1.1"/><rect x="17.3" y="216" width="3.5" height="8.5" fill="#bfbfbf" stroke="#707070" stroke-width="1"/><rect x="18.5" y="213" width="1.1" height="4" fill="#e8772e"/><rect x="14.5" y="216.2" width="1.1" height="3" fill="#e8772e"/><rect x="22.9" y="216.2" width="1.1" height="3" fill="#e8772e"/>
<path d="M12.5 238.5 H26 M12.5 241.8 H26 M12.5 245 H26 M12.5 248.3 H26 M15 236.5 V250 M19.3 236.5 V250 M23.5 236.5 V250" stroke="#ee8a45" stroke-width="1"/><path d="M14.5 248.3 V244.9 H17.8 V248.3 M21.1 248.3 V244.9 H24 V248.3 M14.5 248.3 H24" fill="#fff" stroke="#707070" stroke-width="1"/><rect x="17.8" y="241.4" width="3.3000000000000007" height="6.900000000000006" fill="#bfbfbf" stroke="#707070" stroke-width="1"/>
<path d="M11.5 275.4 V269.5 H14.3 V275.4 M17.5 275.4 V270.1 H20.8 V275.4 M11.5 275.4 H20.8" fill="#fff" stroke="#707070" stroke-width="1"/><rect x="14.3" y="266.5" width="3.1999999999999993" height="8.899999999999977" fill="#bfbfbf" stroke="#707070" stroke-width="1"/><rect x="19.5" y="260.4" width="7" height="7.6" fill="#fff" stroke="#e8772e" stroke-width="1.2"/><rect x="21" y="261.8" width="1" height="1" fill="#3f74b7"/><rect x="21" y="263.8" width="1" height="1" fill="#d24f26"/><rect x="21" y="265.8" width="1" height="1" fill="#4b9a86"/><rect x="23" y="261.8" width="2.5" height="1" fill="#e8772e"/><rect x="23" y="263.8" width="2.5" height="1" fill="#e8772e"/><rect x="23" y="265.8" width="2.5" height="1" fill="#e8772e"/>
<path d="M11.5 285 V298.5 H26" fill="none" stroke="#c3c3c3" stroke-width="1.1"/><path d="M13.5 296 V291 L17 287.5 V293 L20.5 296 V291 L25 287 V293 L20.5 296 M13.5 296 L17 293" fill="none" stroke="#c3c3c3" stroke-width="1"/>
<path d="M11.5 309 V322.5 H26" fill="none" stroke="#555" stroke-width="1.1"/><path d="M13 319.5 Q21 319 24.5 309.5" fill="none" stroke="#e8772e" stroke-width="1.2"/><rect x="14.5" y="315" width="1" height="1" fill="#444"/><rect x="17.3" y="316" width="1" height="1" fill="#444"/><rect x="21" y="312" width="1" height="1" fill="#444"/><rect x="23.5" y="317" width="1" height="1" fill="#444"/><rect x="26" y="310.5" width="1" height="1" fill="#444"/><rect x="16.5" y="320" width="1" height="1" fill="#444"/><rect x="22.5" y="320.2" width="1" height="1" fill="#444"/>
<path d="M11.5 333 V346.5 H26" fill="none" stroke="#c3c3c3" stroke-width="1.1"/><path d="M16 336 V344 M14 340 A2.5 3.5 0 1 0 19 340 A2.5 3.5 0 1 0 14 340 M19 340 L24.5 336.5 V343.5 Z" fill="none" stroke="#c3c3c3" stroke-width="1"/>
</svg>
<!-- SUBMENU -->
<div class="a" style="left:251px;top:184px;width:322px;height:162px;background:#fff;border:1px solid #c6c6c6;box-shadow:1px 1px 3px rgba(0,0,0,0.22)"></div>
<div class="a" style="left:255px;top:188px;width:40px;height:40px;background:#e4edf8;border:1px solid #a9c3e6"></div>
<svg class="a" style="left:250px;top:180px" width="330" height="170">
<rect x="14.00" y="16.10" width="1.1" height="14.70" fill="#707070"/><rect x="17.80" y="22.90" width="2.70" height="7.90" fill="#fff" stroke="#707070" stroke-width="1.1"/><rect x="21.50" y="17.80" width="3.70" height="13.00" fill="#bfbfbf" stroke="#707070" stroke-width="1.1"/><rect x="26.20" y="21.80" width="4.90" height="9.00" fill="#fff" stroke="#707070" stroke-width="1.1"/><rect x="32.10" y="24.80" width="3.20" height="6.00" fill="#bfbfbf" stroke="#707070" stroke-width="1.1"/>
<rect x="12.80" y="31.40" width="23.40" height="7.90" fill="#fff" stroke="#f0892f" stroke-width="1.3"/><rect x="12.20" y="34.75" width="24.60" height="1.2" fill="#f0892f"/><rect x="14.90" y="30.80" width="1.2" height="9.10" fill="#f0892f"/><rect x="25.40" y="30.80" width="1.2" height="9.10" fill="#f0892f"/><rect x="14.00" y="32.53" width="1.00" height="1.1" fill="#f0892f"/><rect x="14.00" y="37.07" width="1.00" height="1.1" fill="#f0892f"/><rect x="17.70" y="32.53" width="6.10" height="1.1" fill="#f0892f"/><rect x="17.70" y="37.07" width="6.10" height="1.1" fill="#f0892f"/><rect x="28.20" y="32.53" width="6.40" height="1.1" fill="#f0892f"/><rect x="28.20" y="37.07" width="6.40" height="1.1" fill="#f0892f"/>
<rect x="29.5" y="32.5" width="12" height="11" fill="#e4edf8"/>
<path d="M31 34 L40 42.30000000000001 M40 34 L31 42.30000000000001" stroke="#e0533a" stroke-width="2.4"/>
<rect x="15.00" y="60.00" width="1.1" height="15.10" fill="#707070"/><rect x="17.60" y="66.80" width="3.20" height="8.30" fill="#fff" stroke="#707070" stroke-width="1.1"/><rect x="21.80" y="61.80" width="3.60" height="13.30" fill="#bfbfbf" stroke="#707070" stroke-width="1.1"/><rect x="26.40" y="65.70" width="4.80" height="9.40" fill="#fff" stroke="#707070" stroke-width="1.1"/><rect x="32.20" y="68.80" width="3.10" height="6.30" fill="#bfbfbf" stroke="#707070" stroke-width="1.1"/>
<rect x="12.80" y="75.70" width="23.50" height="7.30" fill="#fff" stroke="#f0892f" stroke-width="1.3"/><rect x="12.20" y="78.75" width="24.70" height="1.2" fill="#f0892f"/><rect x="16.90" y="75.10" width="1.2" height="8.50" fill="#f0892f"/><rect x="26.40" y="75.10" width="1.2" height="8.50" fill="#f0892f"/><rect x="14.40" y="76.68" width="0.90" height="1.1" fill="#f0892f"/><rect x="14.40" y="80.93" width="0.90" height="1.1" fill="#f0892f"/><rect x="19.70" y="76.68" width="5.10" height="1.1" fill="#f0892f"/><rect x="19.70" y="80.93" width="5.10" height="1.1" fill="#f0892f"/><rect x="29.20" y="76.68" width="5.50" height="1.1" fill="#f0892f"/><rect x="29.20" y="80.93" width="5.50" height="1.1" fill="#f0892f"/>
<rect x="13.90" y="104.20" width="1.1" height="14.70" fill="#707070"/><rect x="16.80" y="110.60" width="3.00" height="8.30" fill="#fff" stroke="#707070" stroke-width="1.1"/><rect x="20.80" y="105.60" width="3.30" height="13.30" fill="#bfbfbf" stroke="#707070" stroke-width="1.1"/><rect x="25.10" y="109.70" width="4.30" height="9.20" fill="#fff" stroke="#707070" stroke-width="1.1"/><rect x="30.40" y="112.70" width="3.40" height="6.20" fill="#bfbfbf" stroke="#707070" stroke-width="1.1"/>
<rect x="14.60" y="119.50" width="19.80" height="7.60" fill="#fff" stroke="#f0892f" stroke-width="1.3"/><rect x="14.00" y="122.70" width="21.00" height="1.2" fill="#f0892f"/><rect x="23.90" y="118.90" width="1.2" height="8.80" fill="#f0892f"/><rect x="16.20" y="120.55" width="6.10" height="1.1" fill="#f0892f"/><rect x="16.20" y="124.95" width="6.10" height="1.1" fill="#f0892f"/><rect x="26.70" y="120.55" width="6.10" height="1.1" fill="#f0892f"/><rect x="26.70" y="124.95" width="6.10" height="1.1" fill="#f0892f"/>
<rect x="3" y="138" width="318" height="1" fill="#e3e3e3"/>
</svg>
<div class="t" style="left:305px;top:201.8px;font-size:12px;color:#262626"><u>Н</u>ет</div>
<div class="t" style="left:305px;top:246.1px;font-size:12px;color:#262626"><u>П</u>оказывать легенду</div>
<div class="t" style="left:305px;top:290.3px;font-size:12px;color:#262626">Не показывать <u>л</u>егенду</div>
<div class="t" style="left:284px;top:325.1px;font-size:12px;color:#262626">Дополнительные п<u>а</u>раметры таблицы данных...</div>
<!-- ARROW -->
<svg class="a" style="left:0;top:0" width="871" height="731">
 <defs><filter id="sh" x="-30%" y="-30%" width="160%" height="160%"><feGaussianBlur in="SourceAlpha" stdDeviation="2.2"/><feOffset dx="2" dy="3" result="b"/><feFlood flood-color="#000" flood-opacity="0.45"/><feComposite in2="b" operator="in"/><feMerge><feMergeNode/><feMergeNode in="SourceGraphic"/></feMerge></filter></defs>
 <g filter="url(#sh)" fill="#f9403f">
  <path d="M333.5 108 L227.2 176.1" stroke="#f9403f" stroke-width="10.8" stroke-linecap="round"/>
  <path d="M202.2 191.6 L219.1 163.7 L235.2 188.4 Z"/>
 </g>
</svg>
<!-- WATERMARK -->
<svg class="a" style="left:0;top:640px" width="300" height="75">
 <g opacity="0.85">
  <rect x="22" y="15" width="64" height="49.5" rx="5" fill="rgba(240,240,240,0.55)" stroke="#dcdcdc" stroke-width="1"/>
  <rect x="25.5" y="18.5" width="57" height="42.5" rx="4" fill="none" stroke="#b3b3b3" stroke-width="3"/>
  <path d="M43 64.5 H61.5 V69 Q61.5 70.5 60 70.5 H44.5 Q43 70.5 43 69 Z" fill="rgba(240,240,240,0.6)" stroke="#d0d0d0" stroke-width="1"/>
  <path d="M34 25.5 L52.5 43.5" stroke="#a9a9a9" stroke-width="2.6" stroke-linecap="round"/>
  <path d="M31.5 23 L42 25 L33.5 33.5 Z" fill="#a9a9a9"/>
 </g>
</svg>
<svg class="a" style="left:0;top:0" width="300" height="731">
 <g fill="none" stroke-linejoin="round">
  <g stroke="#c4babc" stroke-width="7.4">
   <rect x="97" y="671.6" width="19" height="18.7" rx="5"/>
   <path d="M144.5 671.6 H128 Q124.3 671.6 124.3 675.3 V677.2 Q124.3 680.9 128 680.9 H139.3 Q143 680.9 143 684.6 V686.6 Q143 690.3 139.3 690.3 H122"/>
  </g>
  <g stroke="#fcbcc6" stroke-width="5.2">
   <rect x="97" y="671.6" width="19" height="18.7" rx="5"/>
   <path d="M144.5 671.6 H128 Q124.3 671.6 124.3 675.3 V677.2 Q124.3 680.9 128 680.9 H139.3 Q143 680.9 143 684.6 V686.6 Q143 690.3 139.3 690.3 H122"/>
  </g>
  <g stroke="#b3b3b3" stroke-width="7.6">
   <path id="hp" d="M161.2 670.9 V690.3 M181.4 670.9 V690.3 M161.2 680.6 H181.4 M199.2 690.3 H191 Q187.6 690.3 187.6 686.8 V681.3 Q187.6 677.8 191 677.8 H195.7 Q199.2 677.8 199.2 681.3 V684 H187.6 M205.6 670.9 V690.3 M217.8 695 V681.3 Q217.8 677.8 221.3 677.8 H230.6 Q234.1 677.8 234.1 681.3 V686.8 Q234.1 690.3 230.6 690.3 H217.8 M255.8 690.3 H244.5 Q241 690.3 241 686.8 V681.3 Q241 677.8 244.5 677.8 H252.3 Q255.8 677.8 255.8 681.3 V684 H241 M262.7 690.3 V681.3 Q262.7 677.8 266.2 677.8 H276"/>
  </g>
  <g stroke="#fbfbfb" stroke-width="4.6">
   <path d="M161.2 670.9 V690.3 M181.4 670.9 V690.3 M161.2 680.6 H181.4 M199.2 690.3 H191 Q187.6 690.3 187.6 686.8 V681.3 Q187.6 677.8 191 677.8 H195.7 Q199.2 677.8 199.2 681.3 V684 H187.6 M205.6 670.9 V690.3 M217.8 695 V681.3 Q217.8 677.8 221.3 677.8 H230.6 Q234.1 677.8 234.1 681.3 V686.8 Q234.1 690.3 230.6 690.3 H217.8 M255.8 690.3 H244.5 Q241 690.3 241 686.8 V681.3 Q241 677.8 244.5 677.8 H252.3 Q255.8 677.8 255.8 681.3 V684 H241 M262.7 690.3 V681.3 Q262.7 677.8 266.2 677.8 H276"/>
  </g>
 </g>
</svg>
<div class="a" id="lborder"></div>
<div class="a" id="rborder"></div>
<div class="a" id="bborder"></div>
</body></html>
